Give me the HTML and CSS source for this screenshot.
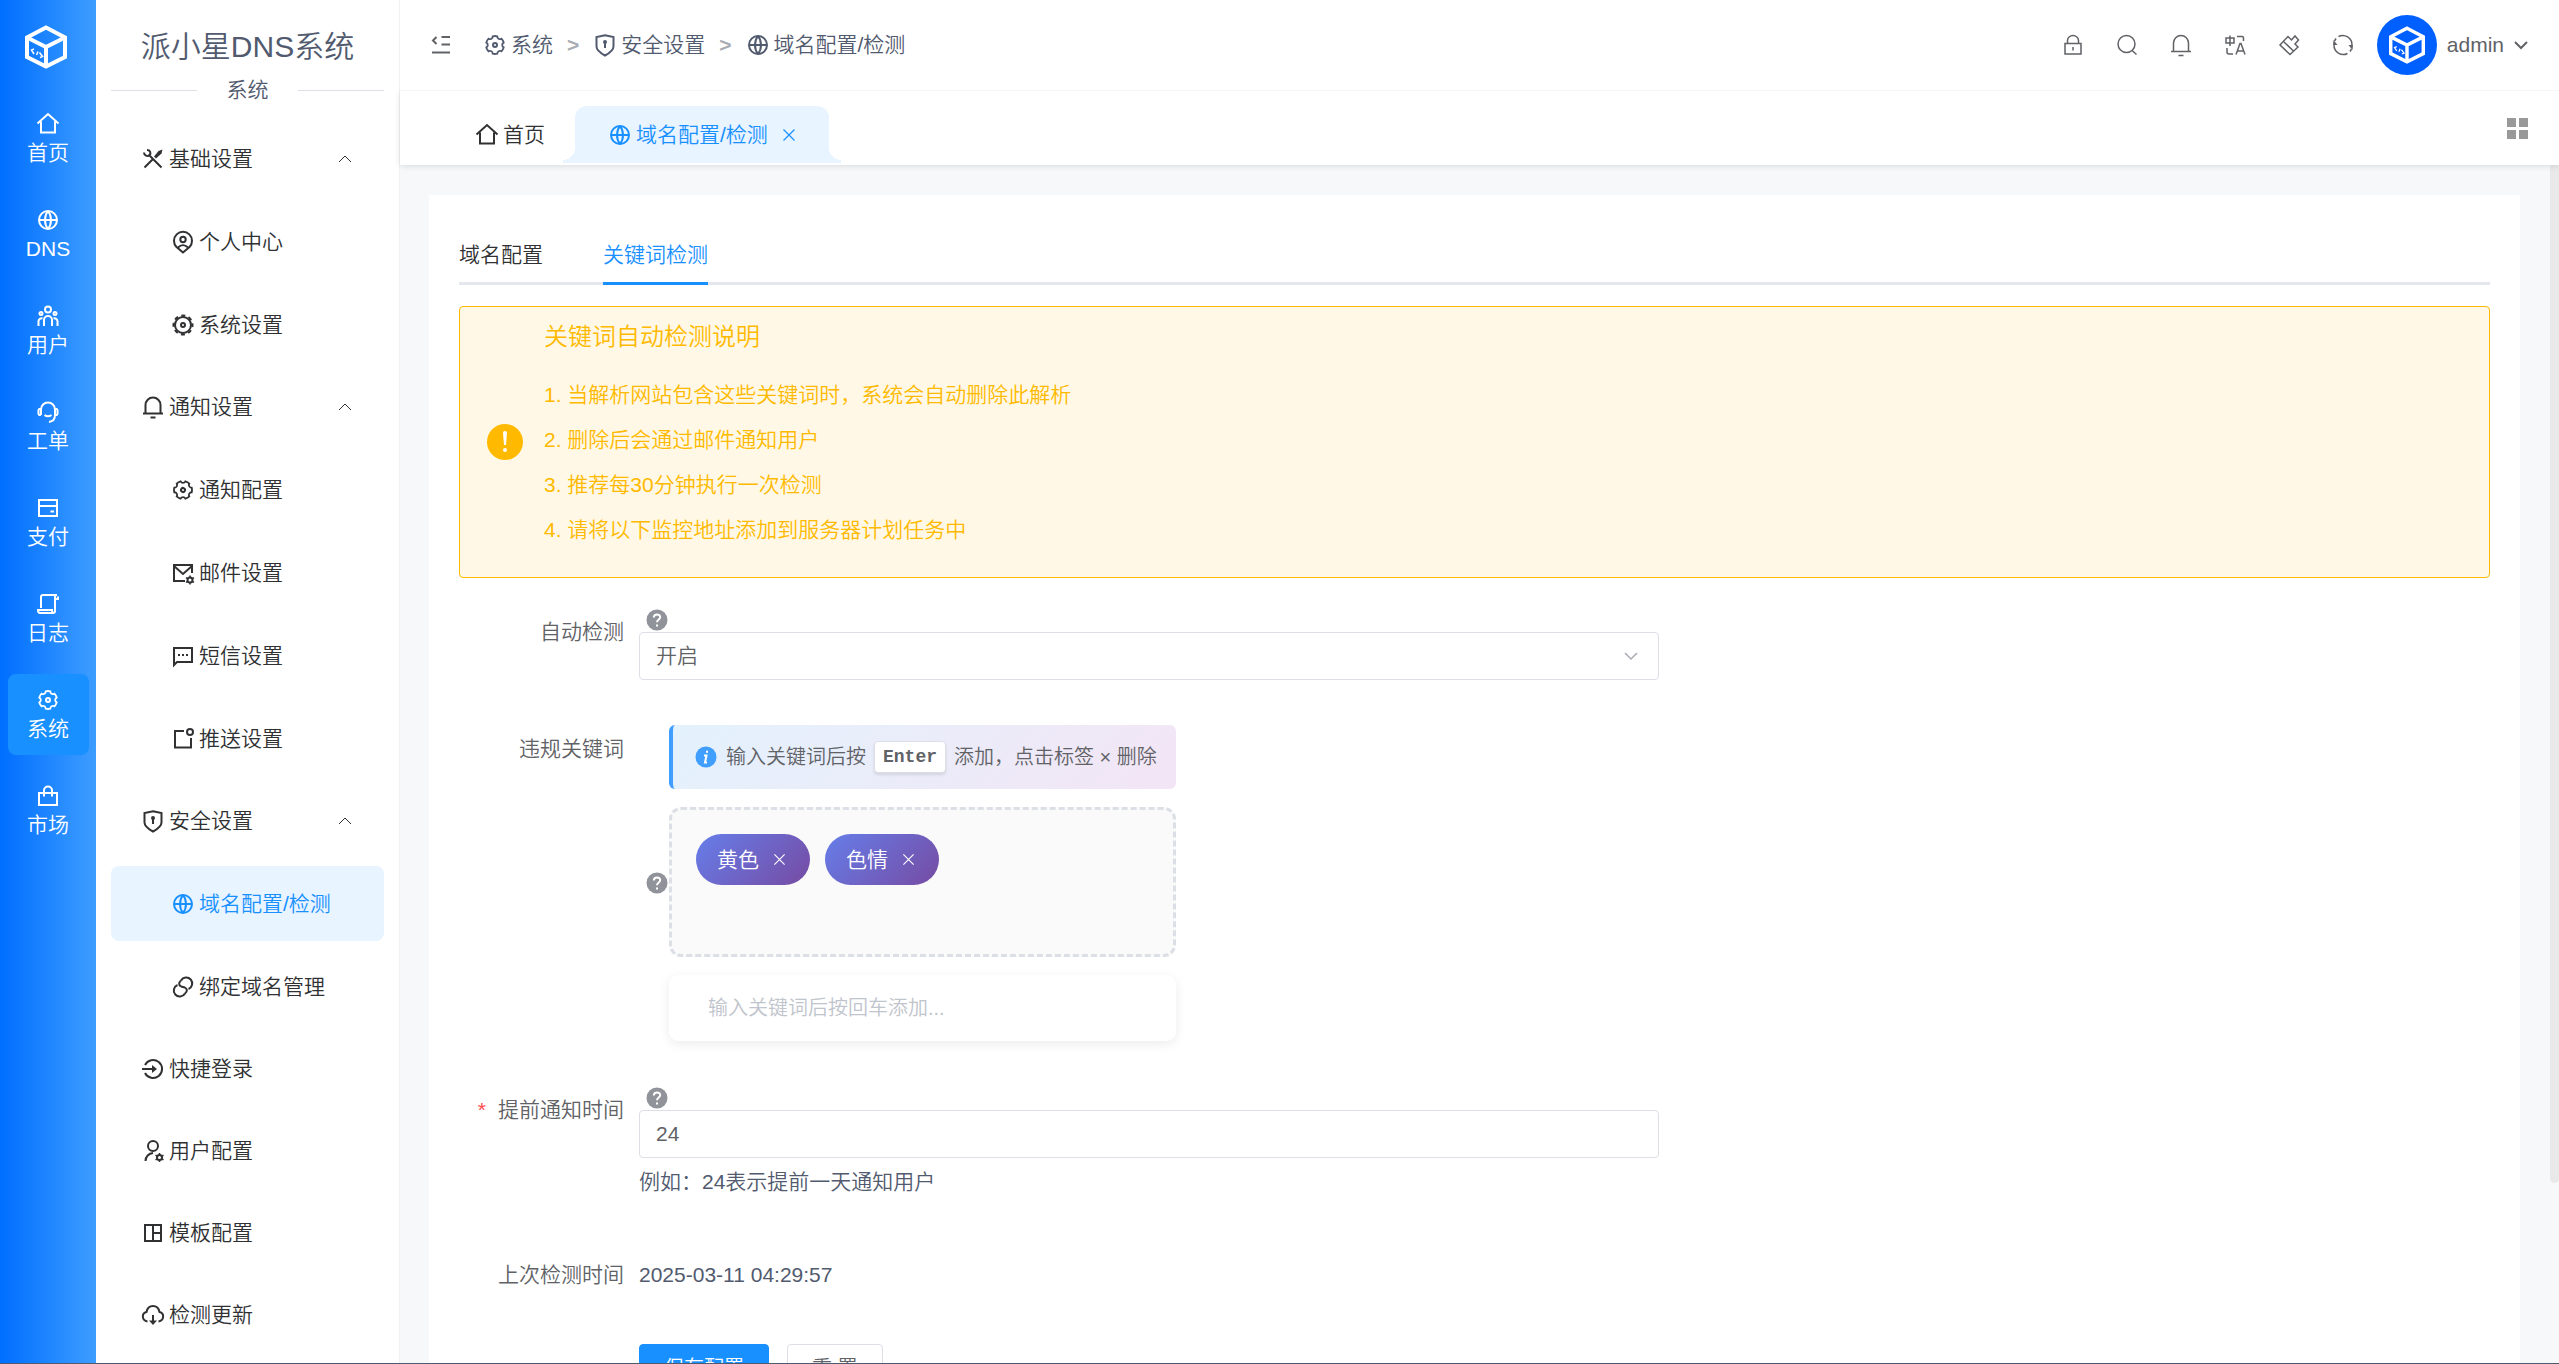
FILE: index.html
```html
<!DOCTYPE html>
<html lang="zh-CN">
<head>
  <meta charset="UTF-8" />
  <meta name="viewport" content="width=device-width, initial-scale=1.0"/>
  <title>域名配置/检测 - 派小星DNS系统</title>
  <link rel="stylesheet" href="styles.css">
</head>
<body>
  <!-- icon sprite -->
  <svg class="sprite" aria-hidden="true">
    <symbol id="i-logo" viewBox="0 0 42 44"><path d="M21 2.5 40 12.5V32L21 41.5 2 32V12.5zM2 12.5 21 22l19-9.5M21 22v19.5" stroke-width="4"/><path d="M9 24l-2.500 1 2.500 4M11.500 30l1.500-3.500M14.500 27.500l3 4-2.500 1" stroke-width="1.5"/></symbol>
    <symbol id="i-home" viewBox="0 0 24 24"><path d="M1.5 11.5 12 2l10.5 9.5M5 9.5v11h14v-11"/></symbol>
    <symbol id="i-globe" viewBox="0 0 24 24"><circle cx="12" cy="12" r="9"/><path d="M3 12h18M12 3c-4 5-4 13 0 18M12 3c4 5 4 13 0 18"/></symbol>
    <symbol id="i-team" viewBox="0 0 24 24"><circle cx="12" cy="5.5" r="3"/><circle cx="5" cy="9.5" r="1.5"/><circle cx="19" cy="9.5" r="1.5"/><path d="M8 22v-6a4 4 0 0 1 8 0v6M2.500 22v-5a3 3 0 0 1 4-2.500M21.500 22v-5a3 3 0 0 0-4-2.500"/></symbol>
    <symbol id="i-headset" viewBox="0 0 24 24"><path d="M5 15V9.500a7 7 0 0 1 14 0V15c0 4-2.500 6.500-6 7M5 9H3.500C2 9 2 15 3.500 15H5M19 9h1.500c1.500 0 1.500 6 0 6H19M8.500 15c2 1.500 5 1.500 7 0"/></symbol>
    <symbol id="i-card" viewBox="0 0 24 24"><path d="M3 4h18v16H3zM3 10h18M14.500 15.500H18"/></symbol>
    <symbol id="i-scroll" viewBox="0 0 24 24"><path d="M5 16V5c0-1.500 1-2 2-2h14c-1.500 0-2 1-2 2v14c0 1.500-1 2-2 2H4c-1.500 0-2-1-2-3h14c0 2 .5 3 1.500 3M19 7h3V4.500"/></symbol>
    <symbol id="i-gear" viewBox="0 0 24 24"><path d="M3.34 17a10 10 0 0 1-.978-2.326 3 3 0 0 0 .002-5.347A9.99 9.99 0 0 1 4.865 4.99a3 3 0 0 0 4.631-2.674 9.99 9.99 0 0 1 5.007.002 3 3 0 0 0 4.632 2.672c.579.59 1.093 1.261 1.525 2.01.433.749.757 1.53.978 2.326a3 3 0 0 0-.002 5.347 9.99 9.99 0 0 1-2.501 4.337 3 3 0 0 0-4.631 2.674 9.99 9.99 0 0 1-5.007-.002 3 3 0 0 0-4.632-2.672A10 10 0 0 1 3.34 17z" transform="translate(1.2 1.2) scale(.9)"/><circle cx="12" cy="12" r="2"/></symbol>
    <symbol id="i-gear-alt" viewBox="0 0 24 24"><use href="#i-gear" transform="rotate(30 12 12)" width="24" height="24"/></symbol>
    <symbol id="i-cog" viewBox="0 0 24 24"><circle cx="12" cy="12" r="8"/><circle cx="12" cy="12" r="9.5" stroke-dasharray="4 3.46" stroke-dashoffset="2"/><circle cx="12" cy="12" r="2"/></symbol>
    <symbol id="i-bag" viewBox="0 0 24 24"><path d="M3 9h18v12H3zM8 12.500V6.500a4 4 0 0 1 8 0v6"/></symbol>
    <symbol id="i-tools" viewBox="0 0 24 24"><path d="M8 8l12.500 12.500M3.500 20.500l8-8M3 5.500c0 3 3.500 4.500 5.500 2.500S9 3 6 3"/><path d="M13 9.500 17.500 4l4-1.500-1 4L15 11.500z" fill="currentColor" stroke="none"/></symbol>
    <symbol id="i-pin" viewBox="0 0 24 24"><path d="M12 22.500 5.500 17a9 9 0 1 1 13 0zM7 17.500c3-3 7-3 10 0"/><circle cx="12" cy="9.5" r="2.7"/></symbol>
    <symbol id="i-bell" viewBox="0 0 24 24"><path d="M4.500 18v-8a7.500 7.500 0 0 1 15 0v8M2 18.500h20M9.500 22.500h5"/></symbol>
    <symbol id="i-mail" viewBox="0 0 24 24"><path d="M14 20H3V4h18v8M3 5l9 8 9-8"/><circle cx="19" cy="19" r="2.5"/><path d="M19 14.500v2M19 21.500v2M15 16.700l2 1.200M21 20.100l2 1.200M15 21.300l2-1.200M21 17.900l2-1.200" stroke-width="1.5"/></symbol>
    <symbol id="i-sms" viewBox="0 0 24 24"><path d="M3 21V4h18v14H6zM7 11h2M11 11h2M15 11h2"/></symbol>
    <symbol id="i-push" viewBox="0 0 24 24"><path d="M13 4H4v16.500h16V11"/><circle cx="19" cy="5" r="3"/></symbol>
    <symbol id="i-shield" viewBox="0 0 24 24"><path d="M12 2.200 20.500 4v9.500c0 3-2 5.500-8.500 9-6.500-3.500-8.500-6-8.500-9V4zM12 9v6"/><circle cx="12" cy="9" r="1"/></symbol>
    <symbol id="i-link" viewBox="0 0 24 24"><path d="M14 18.500A6 6 0 1 1 6.500 10M10 5.500A6 6 0 1 1 17.500 14M10 5.500c-2.500 2-2.500 4.500 0 6M14 18.500c2.500-2 2.500-4.500 0-6M10 11.500l4 1"/></symbol>
    <symbol id="i-login" viewBox="0 0 24 24"><path d="M4 8a9 9 0 1 1 0 8M1 12h13"/><path d="M11 8l5 4-5 4z" fill="currentColor" stroke="none"/></symbol>
    <symbol id="i-user-cog" viewBox="0 0 24 24"><circle cx="12" cy="7" r="5"/><path d="M4.500 22a8 8 0 0 1 7.500-8"/><circle cx="18.500" cy="18.500" r="2.500"/><path d="M18.500 14v2M18.500 21v2M14.500 16.200l2 1.200M20.500 19.600l2 1.200M14.500 20.800l2-1.200M20.500 17.400l2-1.200" stroke-width="1.5"/></symbol>
    <symbol id="i-layout" viewBox="0 0 24 24"><path d="M4 4h16v16H4zM12 4v16M12 12h8"/></symbol>
    <symbol id="i-cloud" viewBox="0 0 24 24"><path d="M6.500 18.500c-6-1-6-8.500-1-9.500 1.500-8 11.500-8 13 0 5 1 5 8.500-1 9.500M12 12v7"/><path d="M8 17.500h8L12 22z" fill="currentColor" stroke="none"/></symbol>
    <symbol id="i-up" viewBox="0 0 14 14"><path d="M1 10l6-6 6 6"/></symbol>
    <symbol id="i-down" viewBox="0 0 14 14"><path d="M1 4l6 6 6-6"/></symbol>
    <symbol id="i-close" viewBox="0 0 14 14"><path d="M1.500 1.500l11 11M12.500 1.500l-11 11"/></symbol>
    <symbol id="i-fold" viewBox="0 0 24 24"><path d="M12.500 4H21M12.500 11.500H21M3 19.500h18M7.500 4 4 7.500 7.500 11"/></symbol>
    <symbol id="i-lock" viewBox="0 0 24 24"><path d="M4 10.500h16V21H4zM6.500 10V7.500a5.500 5 0 0 1 11 0V10M12 14v3.500"/></symbol>
    <symbol id="i-search" viewBox="0 0 24 24"><circle cx="11.500" cy="11" r="8.500"/><path d="M17 17.500l4.500 4"/></symbol>
    <symbol id="i-lang" viewBox="0 0 24 24"><path d="M3 5h8v5H3zM7 2.500V13M14 3.500h5A1.500 1.500 0 0 1 20.500 5v3M4 15v4a2 2 0 0 0 2 2h4M13 21.500l4-11h1l4 11M14.500 18h6"/></symbol>
    <symbol id="i-brush" viewBox="0 0 24 24"><path d="M3 12l8-8.500L14.500 7 18 3l3.500 4-3.500 4 3 3-8 7.500zM7 9l9.500 9"/></symbol>
    <symbol id="i-refresh" viewBox="0 0 24 24"><path d="M7.500 3.500A9.300 9.300 0 0 1 21 12M16.500 20.500A9.300 9.300 0 0 1 3 12M3.500 8 5 5.500M20.500 16 19 18.500"/><path d="M17.500 12H22l-.5 5zM6.500 12H2l.5-5z" fill="currentColor" stroke="none"/></symbol>
    <symbol id="i-grid" viewBox="0 0 21 21"><path d="M0 0h9v9H0zM12 0h9v9h-9zM0 12h9v9H0zM12 12h9v9h-9z" fill="currentColor" stroke="none"/></symbol>
    <symbol id="i-help" viewBox="0 0 24 24"><circle cx="12" cy="12" r="10.500" fill="currentColor" stroke="none"/><path d="M8.800 9.500c.2-4 6.400-4 6.400-.3 0 2.300-3.200 2.300-3.200 5M12 16.500v2" stroke="#fff"/></symbol>
    <symbol id="i-info" viewBox="0 0 24 24"><circle cx="12" cy="12" r="10.500" fill="currentColor" stroke="none"/><path d="M10 10.500h2.500l-1.500 7h2M13 5.800v2" stroke="#fff"/></symbol>
    <symbol id="i-warn" viewBox="0 0 36 36"><circle cx="18" cy="18" r="18" fill="currentColor" stroke="none"/><path d="M16 9a2 2 0 0 1 4 0l-1 12h-2z" fill="#fff" stroke="none"/><circle cx="18" cy="26" r="2" fill="#fff" stroke="none"/></symbol>
  </svg>

  <div class="layout">
    <nav class="rail">
      <a class="rail-logo" href="#"><svg class="icon"><use href="#i-logo"/></svg></a>
      <a class="rail-item" href="#"><svg class="icon"><use href="#i-home"/></svg>首页</a>
      <a class="rail-item" href="#"><svg class="icon"><use href="#i-globe"/></svg>DNS</a>
      <a class="rail-item" href="#"><svg class="icon"><use href="#i-team"/></svg>用户</a>
      <a class="rail-item" href="#"><svg class="icon"><use href="#i-headset"/></svg>工单</a>
      <a class="rail-item" href="#"><svg class="icon"><use href="#i-card"/></svg>支付</a>
      <a class="rail-item" href="#"><svg class="icon"><use href="#i-scroll"/></svg>日志</a>
      <a class="rail-item active" href="#"><svg class="icon"><use href="#i-gear"/></svg>系统</a>
      <a class="rail-item" href="#"><svg class="icon"><use href="#i-bag"/></svg>市场</a>
    </nav>

    <aside class="side">
      <h1>派小星DNS系统</h1>
      <div class="side-divider"><span>系统</span></div>
      <div class="menu">
        <div class="menu-group">
          <a class="menu-item" href="#"><svg class="icon"><use href="#i-tools"/></svg>基础设置<svg class="icon arrow"><use href="#i-up"/></svg></a>
          <a class="menu-item sub" href="#"><svg class="icon"><use href="#i-pin"/></svg>个人中心</a>
          <a class="menu-item sub" href="#"><svg class="icon"><use href="#i-cog"/></svg>系统设置</a>
        </div>
        <div class="menu-group">
          <a class="menu-item" href="#"><svg class="icon"><use href="#i-bell"/></svg>通知设置<svg class="icon arrow"><use href="#i-up"/></svg></a>
          <a class="menu-item sub" href="#"><svg class="icon"><use href="#i-gear-alt"/></svg>通知配置</a>
          <a class="menu-item sub" href="#"><svg class="icon"><use href="#i-mail"/></svg>邮件设置</a>
          <a class="menu-item sub" href="#"><svg class="icon"><use href="#i-sms"/></svg>短信设置</a>
          <a class="menu-item sub" href="#"><svg class="icon"><use href="#i-push"/></svg>推送设置</a>
        </div>
        <div class="menu-group">
          <a class="menu-item" href="#"><svg class="icon"><use href="#i-shield"/></svg>安全设置<svg class="icon arrow"><use href="#i-up"/></svg></a>
          <a class="menu-item sub active" href="#"><svg class="icon"><use href="#i-globe"/></svg>域名配置/检测</a>
          <a class="menu-item sub" href="#"><svg class="icon"><use href="#i-link"/></svg>绑定域名管理</a>
        </div>
        <a class="menu-item" href="#"><svg class="icon"><use href="#i-login"/></svg>快捷登录</a>
        <a class="menu-item" href="#"><svg class="icon"><use href="#i-user-cog"/></svg>用户配置</a>
        <a class="menu-item" href="#"><svg class="icon"><use href="#i-layout"/></svg>模板配置</a>
        <a class="menu-item" href="#"><svg class="icon"><use href="#i-cloud"/></svg>检测更新</a>
      </div>
    </aside>

    <div class="main">
      <header class="header">
        <button class="icon-btn fold" type="button" aria-label="收起菜单"><svg class="icon"><use href="#i-fold"/></svg></button>
        <div class="breadcrumb">
          <a href="#"><svg class="icon"><use href="#i-gear"/></svg>系统</a>
          <span class="sep">&gt;</span>
          <a href="#"><svg class="icon"><use href="#i-shield"/></svg>安全设置</a>
          <span class="sep">&gt;</span>
          <a href="#"><svg class="icon"><use href="#i-globe"/></svg>域名配置/检测</a>
        </div>
        <div class="tools">
          <button class="icon-btn" type="button" aria-label="锁屏"><svg class="icon"><use href="#i-lock"/></svg></button>
          <button class="icon-btn" type="button" aria-label="搜索"><svg class="icon"><use href="#i-search"/></svg></button>
          <button class="icon-btn" type="button" aria-label="通知"><svg class="icon"><use href="#i-bell"/></svg></button>
          <button class="icon-btn" type="button" aria-label="语言"><svg class="icon"><use href="#i-lang"/></svg></button>
          <button class="icon-btn" type="button" aria-label="主题"><svg class="icon"><use href="#i-brush"/></svg></button>
          <button class="icon-btn" type="button" aria-label="刷新"><svg class="icon"><use href="#i-refresh"/></svg></button>
        </div>
        <button class="user" type="button">
          <span class="avatar"><svg class="icon"><use href="#i-logo"/></svg></span>
          admin
          <svg class="icon arrow"><use href="#i-down"/></svg>
        </button>
      </header>

      <div class="page-tabs">
        <a class="page-tab" href="#"><svg class="icon"><use href="#i-home"/></svg>首页</a>
        <a class="page-tab active" href="#"><svg class="icon"><use href="#i-globe"/></svg>域名配置/检测<svg class="icon close"><use href="#i-close"/></svg></a>
        <button class="icon-btn more" type="button" aria-label="标签操作"><svg class="icon"><use href="#i-grid"/></svg></button>
      </div>

      <div class="content">
        <div class="card">
          <div class="tabs">
            <a href="#">域名配置</a>
            <a class="active" href="#">关键词检测</a>
          </div>

          <div class="alert">
            <svg class="icon"><use href="#i-warn"/></svg>
            <div>
              <h2>关键词自动检测说明</h2>
              <p>1. 当解析网站包含这些关键词时，系统会自动删除此解析</p>
              <p>2. 删除后会通过邮件通知用户</p>
              <p>3. 推荐每30分钟执行一次检测</p>
              <p>4. 请将以下监控地址添加到服务器计划任务中</p>
            </div>
          </div>

          <form class="form">
            <div class="form-row">
              <label for="auto">自动检测</label>
              <div class="field">
                <svg class="icon help"><use href="#i-help"/></svg>
                <div class="select">
                  <select id="auto">
                    <option>开启</option>
                    <option>关闭</option>
                  </select>
                  <svg class="icon arrow"><use href="#i-down"/></svg>
                </div>
              </div>
            </div>

            <div class="form-row">
              <label for="keyword">违规关键词</label>
              <div class="field keywords">
                <svg class="icon help"><use href="#i-help"/></svg>
                <div class="keyword-box">
                  <div class="tip">
                    <svg class="icon"><use href="#i-info"/></svg>
                    <span>输入关键词后按</span>
                    <kbd>Enter</kbd>
                    <span>添加，点击标签 × 删除</span>
                  </div>
                  <div class="tags">
                    <span class="tag">黄色<button type="button" aria-label="删除"><svg class="icon"><use href="#i-close"/></svg></button></span>
                    <span class="tag">色情<button type="button" aria-label="删除"><svg class="icon"><use href="#i-close"/></svg></button></span>
                  </div>
                  <input class="keyword-input" id="keyword" type="text" placeholder="输入关键词后按回车添加...">
                </div>
              </div>
            </div>

            <div class="form-row">
              <label class="required" for="hours">提前通知时间</label>
              <div class="field">
                <svg class="icon help"><use href="#i-help"/></svg>
                <input class="input" id="hours" type="text" value="24">
                <p class="hint">例如：24表示提前一天通知用户</p>
              </div>
            </div>

            <div class="form-row">
              <span class="label">上次检测时间</span>
              <p class="field hint">2025-03-11 04:29:57</p>
            </div>

            <div class="form-row actions">
              <button class="btn primary" type="submit">保存配置</button>
              <button class="btn" type="reset">重 置</button>
            </div>
          </form>
        </div>
        <div class="scroll-thumb"></div>
      </div>
    </div>
  </div>
</body>
</html>
```

FILE: styles.css
```css
* { box-sizing: border-box; }
body {
  margin: 0;
  font: 350 21px/30px "Liberation Sans", "Noto Sans CJK SC", sans-serif;
  color: #515a6e;
  background: #fff;
  overflow: hidden;
}
h1, h2, p { margin: 0; font-weight: inherit; }
a { color: inherit; text-decoration: none; }
button, input, select { font: inherit; color: inherit; }
button { padding: 0; border: none; background: none; cursor: pointer; }

.sprite { position: absolute; width: 0; height: 0; }
.icon { width: 24px; height: 24px; flex: none; fill: none; stroke: currentColor; stroke-width: 2; }
.icon.arrow { width: 14px; height: 14px; stroke-width: 1; }
.icon-btn { display: flex; color: #606266; }

.layout { display: flex; height: 100vh; border-bottom: 1px solid #515a6e; }

/* left rail */
.rail { width: 96px; flex: none; color: #fff; background: linear-gradient(90deg, #006eff, #3d9dff); }
.rail-logo { display: flex; justify-content: center; padding: 25px 4px 29px 0; }
.rail-logo .icon { width: 42px; height: 44px; }
.rail-item {
  display: flex;
  flex-direction: column;
  align-items: center;
  gap: 2px;
  height: 81px;
  margin: 0 7px 15px 8px;
  padding: 14px 1px 0 0;
  border-radius: 8px;
}
.rail-item.active { background: #1890ff; }

/* side menu */
.side { width: 303px; flex: none; padding: 24px 15px 0; overflow: hidden; }
.side h1 { font-size: 30px; line-height: 45px; text-align: center; }
.side-divider { display: flex; align-items: center; justify-content: space-between; height: 42px; }
.side-divider::before, .side-divider::after { content: ""; width: 86px; height: 1px; background: #dcdfe6; }
.menu { display: flex; flex-direction: column; gap: 7px; margin-top: 10px; color: #303133; }
.menu-group { display: flex; flex-direction: column; gap: 8px; }
.menu-item { display: flex; align-items: center; gap: 4px; height: 75px; padding: 0 32px 0 30px; border-radius: 8px; }
.menu-item.sub { padding-left: 60px; }
.menu-item.active { color: #1890ff; background: #e8f4ff; }
.menu-item .arrow { margin-left: auto; }

/* top bar */
.main { flex: 1; min-width: 0; display: flex; flex-direction: column; border-left: 1px solid #f2f2f2; }
.header { position: relative; z-index: 2; display: flex; align-items: center; height: 91px; padding: 0 31px 0 29px; border-bottom: 1px solid #f6f6f6; background: #fff; }
.breadcrumb { display: flex; align-items: center; gap: 14px; margin-left: 30px; }
.breadcrumb a { display: flex; align-items: center; gap: 4px; }
.breadcrumb .sep { font-weight: bold; color: #a8abb2; }
.tools { display: flex; gap: 30px; margin-left: auto; }
.tools .icon { stroke-width: 1.5; }
.user { display: flex; align-items: center; gap: 10px; margin-left: 22px; color: #606266; }
.user .arrow { stroke-width: 2; }
.avatar { display: flex; align-items: center; justify-content: center; width: 60px; height: 60px; border-radius: 50%; background: #0060ff; color: #fff; }
.avatar .icon { width: 36px; height: 38px; }

.page-tabs { position: relative; z-index: 1; display: flex; align-items: center; height: 74px; padding: 0 31px 0 45px; box-shadow: 0 1px 6px rgba(0, 21, 41, .12); }
.page-tab { position: relative; display: flex; align-items: center; gap: 4px; height: 57px; padding: 0 30px; margin-top: 13px; color: #303133; }
.page-tab.active { padding: 0 33px; border-radius: 12px 12px 0 0; background: #e8f4ff; color: #1890ff; }
.page-tab.active::before, .page-tab.active::after { content: ""; position: absolute; bottom: 0; width: 12px; height: 15px; }
.page-tab.active::before { right: 100%; background: radial-gradient(circle at 0 0, transparent 12px, #e8f4ff 12px); }
.page-tab.active::after { left: 100%; background: radial-gradient(circle at 100% 0, transparent 12px, #e8f4ff 12px); }
.page-tab .close { width: 14px; height: 14px; margin-left: 10px; stroke-width: 1.2; }
.page-tabs .more { margin-left: auto; color: #999; }
.page-tabs .more .icon { width: 21px; height: 21px; }

/* content */
.content { position: relative; flex: 1; min-height: 0; padding: 30px 39px 0 29px; overflow: hidden; background: #f6f8f9; }
.card { padding: 30px; background: #fff; }
.scroll-thumb { position: absolute; top: 0; right: 0; width: 9px; height: 85%; border-radius: 0 0 6px 6px; background: #e9e9e9; }

.tabs { display: flex; gap: 60px; border-bottom: 3px solid #e4e7ed; color: #303133; }
.tabs a { height: 60px; margin-bottom: -3px; line-height: 60px; }
.tabs a.active { color: #1890ff; border-bottom: 3px solid #1890ff; }

.alert {
  display: flex;
  align-items: center;
  gap: 21px;
  margin: 21px 0 30px;
  padding: 12px 27px 25px;
  border: 1px solid #ffba00;
  border-radius: 4px;
  background: #fff8e6;
  color: #ffba00;
}
.alert .icon { width: 36px; height: 36px; margin-top: 12px; }
.alert h2 { margin-bottom: 17px; font-size: 24px; line-height: 36px; }
.alert p { line-height: 45px; }

.form { display: flex; flex-direction: column; gap: 45px; width: 59.1%; }
.form-row { display: flex; }
.form-row label, .form-row .label { width: 180px; flex: none; padding-right: 15px; line-height: 48px; text-align: right; color: #606266; }
.form-row label.required::before { content: "*"; margin-right: 12px; color: #ff4d4f; }
.field { flex: 1; min-width: 0; }
.help { display: block; margin-left: 6px; color: #909399; }
.hint { line-height: 48px; }

.select { position: relative; }
.input, select { display: block; width: 100%; height: 48px; padding: 0 16px; border: 1px solid #dcdfe6; border-radius: 4px; background: #fff; color: #606266; }
select { appearance: none; }
.select .arrow { position: absolute; top: 17px; right: 20px; width: 16px; color: #a8abb2; stroke-width: 1.5; }

.keywords { display: flex; align-items: center; }
.keyword-box { display: flex; flex-direction: column; gap: 18px; width: 507px; }
.tip {
  display: flex;
  align-items: center;
  height: 64px;
  padding-left: 21px;
  border-left: 4px solid #409eff;
  border-radius: 6px;
  font-size: 20px;
  white-space: nowrap;
  color: #606266;
  background: linear-gradient(135deg, #e3f2fd, #f3e5f5);
}
.tip .icon { margin-right: 8px; color: #409eff; }
.tip kbd { margin: 0 8px; padding: 0 8px; border: 1px solid #dcdfe6; border-radius: 4px; font: bold 18px/30px "Liberation Mono", monospace; background: #fff; box-shadow: 0 2px 3px rgba(0, 0, 0, .1); }
.tags { display: flex; align-items: flex-start; gap: 15px; height: 150px; padding: 24px; border: 3px dashed #dcdfe6; border-radius: 12px; background: #fafafa; }
.tag { display: flex; align-items: center; gap: 14px; height: 51px; padding: 0 24px 0 21px; border-radius: 26px; color: #fff; background: linear-gradient(135deg, #667eea, #764ba2); }
.tag button { display: flex; }
.tag .icon { width: 13px; height: 13px; stroke-width: 1.2; }
.keyword-input { height: 66px; padding: 0 39px; border: none; border-radius: 9px; font-size: 20px; background: #fff; box-shadow: 0 3px 12px rgba(0, 0, 0, .08); }
.keyword-input::placeholder { color: #c0c4cc; }

.actions { gap: 18px; padding-left: 180px; }
.btn { height: 48px; padding: 0 24px; border: 1px solid #dcdfe6; border-radius: 4px; font-size: 20px; color: #606266; background: #fff; }
.btn.primary { border-color: #1890ff; background: #1890ff; color: #fff; }
```
